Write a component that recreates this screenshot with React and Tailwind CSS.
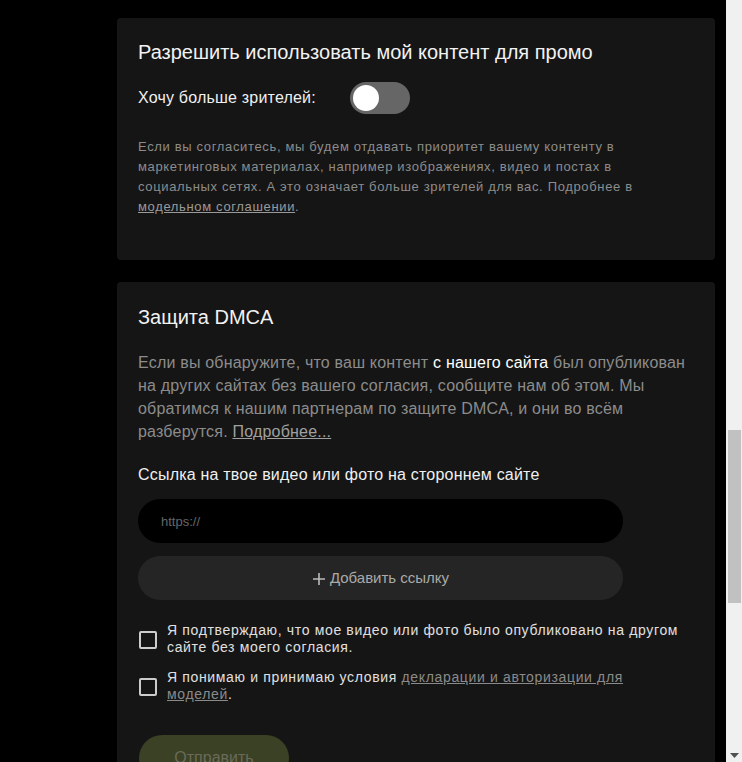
import React from "react";
import { useState } from "react";

export default function App() {
  const [promo, setPromo] = useState(false);
  const [links, setLinks] = useState([""]);
  const [confirmed, setConfirmed] = useState(false);
  const [accepted, setAccepted] = useState(false);

  return (
    <div className="flex h-[762px] overflow-hidden bg-black font-['Liberation_Sans',Arial,sans-serif]">
      <div className="flex-1 pl-[117px] pr-[11px] pt-[18px]">
        {/* Promo card */}
        <div className="bg-[#151515] rounded-[4px] px-[21px] pt-[22px] pb-[43px]">
          <h2 className="text-[20px] leading-[24px] text-[#f2f2f2]">
            Разрешить использовать мой контент для промо
          </h2>
          <div className="flex items-center mt-[18px]">
            <span className="text-[16px] text-[#f0f0f0] tracking-[0.2px] w-[212px]">Хочу больше зрителей:</span>
            <button
              onClick={() => setPromo(!promo)}
              className={`w-[60px] h-[32px] rounded-full flex items-center px-[3px] ${promo ? "bg-[#7a8a3a] justify-end" : "bg-[#666666] justify-start"}`}
            >
              <span className="w-[26px] h-[26px] rounded-full bg-white block"></span>
            </button>
          </div>
          <p className="mt-[23px] max-w-[500px] text-[13px] leading-[20px] tracking-[0.65px] text-[#8c8c8c]">
            Если вы согласитесь, мы будем отдавать приоритет вашему контенту в маркетинговых материалах, например изображениях, видео и постах в социальных сетях. А это означает больше зрителей для вас. Подробнее в{" "}
            <a className="underline text-[#9a9a9a]">модельном соглашении</a>.
          </p>
        </div>

        {/* DMCA card */}
        <div className="bg-[#151515] rounded-[4px] px-[21px] pt-[23px] pb-[60px] mt-[22px]">
          <h2 className="text-[20px] leading-[24px] text-[#f2f2f2]">Защита DMCA</h2>
          <p className="mt-[22px] text-[16px] leading-[23px] tracking-[0.2px] text-[#8c8c8c]">
            Если вы обнаружите, что ваш контент <span className="text-white">с нашего сайта</span> был опубликован на других сайтах без вашего согласия, сообщите нам об этом. Мы обратимся к нашим партнерам по защите DMCA, и они во всём разберутся.{" "}
            <a className="underline text-[#a0a0a0]">Подробнее...</a>
          </p>
          <div className="mt-[22px] text-[16px] leading-[20px] tracking-[0.2px] text-[#f0f0f0]">
            Ссылка на твое видео или фото на стороннем сайте
          </div>
          <div className="w-[485px] mt-[14px] flex flex-col gap-[13px]">
            {links.map((l, i) => (
              <input
                key={i}
                value={l}
                onChange={(e) => setLinks(links.map((x, j) => (j === i ? e.target.value : x)))}
                placeholder="https://"
                className="h-[44px] w-full rounded-full bg-black px-[23px] text-[13px] text-[#ccc] placeholder:text-[#666] outline-none"
              />
            ))}
            <button
              onClick={() => setLinks([...links, ""])}
              className="h-[44px] w-full rounded-full bg-[#252525] flex items-center justify-center gap-[4px] text-[15px] text-[#aaaaaa]"
            >
              <svg width="14" height="14" viewBox="0 0 14 14" className="mt-[1px]">
                <path d="M7 1v12M1 7h12" stroke="#bbbbbb" strokeWidth="1.6" />
              </svg>
              Добавить ссылку
            </button>
          </div>

          <label className="flex items-center gap-[10px] mt-[22px] cursor-pointer" onClick={() => setConfirmed(!confirmed)}>
            <span className={`ml-[1px] mt-[1px] w-[18px] h-[18px] shrink-0 rounded-[2px] border-2 border-[#cccccc] ${confirmed ? "bg-[#cccccc]" : ""}`}></span>
            <span className="text-[14px] leading-[17px] tracking-[0.65px] text-[#e0e0e0] max-w-[530px]">
              Я подтверждаю, что мое видео или фото было опубликовано на другом сайте без моего согласия.
            </span>
          </label>
          <label className="flex items-center gap-[10px] mt-[13px] cursor-pointer" onClick={() => setAccepted(!accepted)}>
            <span className={`ml-[1px] mt-[2px] w-[18px] h-[18px] shrink-0 rounded-[2px] border-2 border-[#cccccc] ${accepted ? "bg-[#cccccc]" : ""}`}></span>
            <span className="text-[14px] leading-[17px] tracking-[0.65px] text-[#e0e0e0] max-w-[470px]">
              Я понимаю и принимаю условия <a className="underline text-[#8a8a8a]">декларации и авторизации для моделей</a>.
            </span>
          </label>

          <button className="ml-[1px] mt-[32px] h-[46px] w-[150px] rounded-full bg-[#3a4124] text-[16px] text-[#6a6a5a]">
            Отправить
          </button>
        </div>
      </div>

      {/* scrollbar */}
      <div className="w-[16px] bg-[#f0f0f0] flex flex-col items-center pt-[430px]">
        <div className="w-[13px] h-[173px] bg-[#c1c1c1] ml-[1px]"></div>
        <div className="flex-1"></div>
        <svg width="9" height="5" viewBox="0 0 9 5" className="mb-[4px]">
          <path d="M0 0h9L4.5 5z" fill="#505050" />
        </svg>
      </div>
    </div>
  );
}
